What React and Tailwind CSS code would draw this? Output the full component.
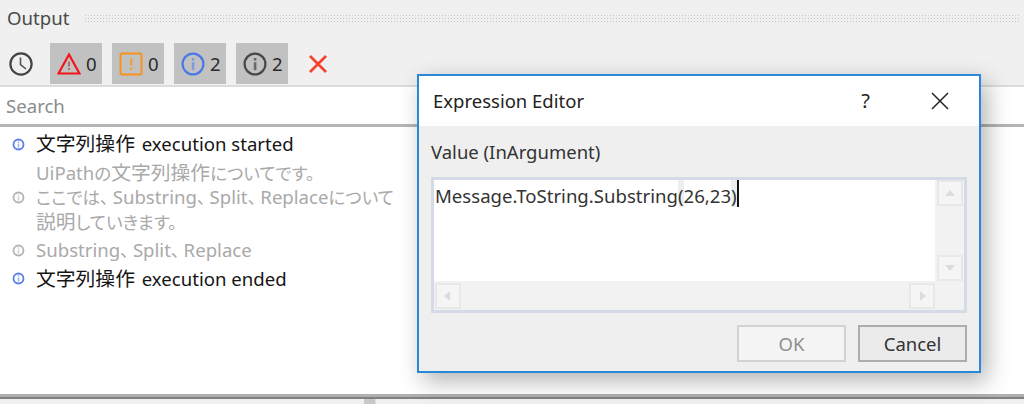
import React from "react";

const FONT = { fontFamily: '"Noto Sans", "Noto Sans CJK JP", sans-serif' };

// small round info marker used in the log rows
const RowIcon = ({ color }) => (
  <svg width="13" height="13" viewBox="0 0 13 13" fill="none" aria-hidden="true">
    <circle cx="6.5" cy="6.5" r="5" stroke={color} strokeWidth="1.8" />
    <rect x="5.7" y="3.4" width="1.6" height="1.4" fill={color} opacity="0.6" />
    <rect x="5.7" y="5.6" width="1.6" height="4" fill={color} opacity="0.6" />
  </svg>
);

const ClockIcon = () => (
  <svg width="26" height="26" viewBox="0 0 26 26" fill="none" aria-hidden="true">
    <circle cx="13" cy="13" r="10.6" stroke="#444" strokeWidth="2.2" />
    <path d="M12.5 6.5V13.5L18 18" stroke="#555" strokeWidth="1.6" />
  </svg>
);

const ErrorIcon = () => (
  <svg width="24" height="24" viewBox="0 0 24 24" fill="none" aria-hidden="true">
    <path d="M12 2.5L22.5 21.5H1.5L12 2.5Z" stroke="#f4141c" strokeWidth="2.2" />
    <rect x="11" y="9.5" width="2" height="5" fill="#b9686a" />
    <rect x="11" y="16" width="2" height="2" fill="#b9686a" />
  </svg>
);

const WarnIcon = () => (
  <svg width="24" height="24" viewBox="0 0 24 24" fill="none" aria-hidden="true">
    <rect x="1.5" y="1.5" width="21" height="21" rx="1.5" stroke="#f7921e" strokeWidth="2" />
    <rect x="11" y="6.5" width="2.4" height="7" fill="#f0a040" />
    <rect x="11" y="15.5" width="2.4" height="2.4" fill="#f0a040" />
  </svg>
);

const InfoIcon = ({ color, fill }) => (
  <svg width="24" height="24" viewBox="0 0 24 24" fill="none" aria-hidden="true">
    <circle cx="12" cy="12" r="10.4" stroke={color} strokeWidth="2.2" />
    <rect x="10.8" y="6" width="2.6" height="2.6" fill={fill} />
    <rect x="10.8" y="10.2" width="2.6" height="8" fill={fill} />
  </svg>
);

const CloseRed = () => (
  <svg width="20" height="20" viewBox="0 0 20 20" fill="none" aria-hidden="true">
    <path d="M2 2L18 18M18 2L2 18" stroke="#f5402c" strokeWidth="2.6" />
  </svg>
);

const FilterButton = ({ icon, count }) => (
  <div className="w-[52px] h-[41px] bg-[#c1c1c1] flex items-center pl-[7px] gap-[5px]">
    {icon}
    <span className="text-[18.6px] text-[#2a2a2a]">{count}</span>
  </div>
);

const ScrollButton = ({ points }) => (
  <div className="w-[26px] h-[26px] bg-[#f5f5f5] border-2 border-[#e8e8e8] flex items-center justify-center">
    <svg width="14" height="14" viewBox="0 0 14 14" aria-hidden="true">
      <polygon points={points} fill="#dcdcdc" />
    </svg>
  </div>
);

// kanji sit a little larger than the latin text
const Kanji = ({ children }) => <span className="text-[19.8px]">{children}</span>;

// kana and punctuation are set tight in the reference
const Kana = ({ children }) => (
  <span className="text-[17.5px] [font-feature-settings:'palt']">{children}</span>
);

const Comma = () => (
  <span className="text-[17.5px] pr-[4px] [font-feature-settings:'palt']">、</span>
);

const LogRow = ({ color, dim, children, className }) => (
  <div className={`flex items-center ${className}`}>
    <div className="w-[36px] flex justify-center">
      <RowIcon color={color} />
    </div>
    <div className={`leading-[24.5px] text-[18.6px] whitespace-nowrap ${dim ? "text-[#a9a9a9]" : "text-[#151515]"}`}>
      {children}
    </div>
  </div>
);

export default function App() {
  return (
    <div className="relative w-[1024px] h-[404px] overflow-hidden bg-[#f0f0f0] flex flex-col" style={FONT}>
      {/* Output panel header */}
      <div className="h-[36px] flex items-center pl-[7px] gap-[15px] shrink-0">
        <span className="text-[18.6px] text-[#4a4a4a]">Output</span>
        <div className="flex-1 h-[8px] mr-[5px] bg-[radial-gradient(#c4c4c4_1px,transparent_1px)] bg-[length:3px_3px]" />
      </div>

      {/* Toolbar */}
      <div className="h-[49px] flex items-start shrink-0 pt-[7px]">
        <div className="w-[50px] h-[41px] flex items-center justify-center pr-[9px]">
          <ClockIcon />
        </div>
        <div className="flex gap-[10px]">
          <FilterButton icon={<ErrorIcon />} count="0" />
          <FilterButton icon={<WarnIcon />} count="0" />
          <FilterButton icon={<InfoIcon color="#4a78e8" fill="#7f9be0" />} count="2" />
          <FilterButton icon={<InfoIcon color="#484848" fill="#6a6a6a" />} count="2" />
        </div>
        <div className="ml-[20px] h-[41px] flex items-center">
          <CloseRed />
        </div>
      </div>

      {/* Search */}
      <div className="h-[42px] shrink-0 bg-white border-t-2 border-b-[3px] border-t-[#dcdcdc] border-b-[#b4b4b4] flex items-center pl-[6px]">
        <span className="text-[18.6px] text-[#8c8c8c]">Search</span>
      </div>

      {/* Log list */}
      <div className="h-[267px] shrink-0 bg-white pt-[5px]">
        <LogRow color="#5b7fe6">
          <Kanji>文字列操作</Kanji>
          <span className="ml-[2px]"> execution started</span>
        </LogRow>
        <LogRow color="#b4b4b4" dim className="mt-[4px]">
          UiPath<Kana>の</Kana><Kanji>文字列操作</Kanji><Kana>についてです。</Kana>
          <br />
          <Kana>ここでは</Kana><Comma />Substring<Comma />Split<Comma />Replace<Kana>について</Kana>
          <br />
          <Kanji>説明</Kanji><Kana>していきます。</Kana>
        </LogRow>
        <LogRow color="#b4b4b4" dim className="mt-[4px]">
          Substring<Comma />Split<Comma />Replace
        </LogRow>
        <LogRow color="#5b7fe6" className="mt-[4px]">
          <Kanji>文字列操作</Kanji>
          <span className="ml-[2px]"> execution ended</span>
        </LogRow>
      </div>

      {/* Bottom splitter */}
      <div className="h-[5px] shrink-0 bg-[#b0b0b0] border-b-2 border-b-[#808080]" />
      <div className="flex-1 flex">
        <div className="ml-[364px] w-[12px] bg-[#c8c8c8] border-r border-r-[#e0e0e0]" />
      </div>

      {/* Expression Editor dialog */}
      <div className="absolute left-[417px] top-[74px] w-[564px] h-[299px] bg-[#efefef] border-2 border-[#2b88d8] flex flex-col shadow-[6px_8px_22px_rgba(0,0,0,0.3)]">
        <div className="h-[50px] shrink-0 bg-white flex items-center pl-[14px] pr-[30px] pb-[1px]">
          <span className="flex-1 text-[18.5px] text-[#222]">Expression Editor</span>
          <span className="text-[20px] text-[#222] mr-[61px]">?</span>
          <svg width="18" height="18" viewBox="0 0 18 18" fill="none" aria-hidden="true">
            <path d="M1 1L17 17M17 1L1 17" stroke="#222" strokeWidth="1.5" />
          </svg>
        </div>

        <div className="flex-1 flex flex-col pl-[12px] pr-[12px]">
          <div className="h-[51px] flex items-center text-[18.5px] text-[#333] shrink-0">Value (InArgument)</div>

          {/* Editor box */}
          <div className="h-[136px] shrink-0 border-[3px] border-[#d5dbe6] flex flex-col">
            <div className="flex-1 flex min-h-0">
              <div className="flex-1 bg-white pl-[1px] flex items-start">
                <div className="flex items-start h-[27px] text-[18.6px] leading-[32px] text-[#333]">
                  <span className="h-[27px]">Message.ToString.Substring</span>
                  <span className="h-[27px] bg-[#eeeeee]">(</span>
                  <span className="h-[27px]">26,23</span>
                  <span className="h-[27px] bg-[#eeeeee]">)</span>
                  <span className="w-[2px] h-[27px] bg-[#111]" />
                </div>
              </div>
              <div className="w-[29px] bg-[#f2f2f2] flex flex-col items-center justify-between">
                <ScrollButton points="7,4 12,10 2,10" />
                <ScrollButton points="2,4 12,4 7,10" />
              </div>
            </div>
            <div className="h-[29px] shrink-0 bg-[#f2f2f2] flex items-center pl-[1px] pr-[29px] justify-between">
              <ScrollButton points="3,7 9,2 9,12" />
              <ScrollButton points="5,2 11,7 5,12" />
            </div>
          </div>

          {/* Dialog buttons */}
          <div className="flex justify-end gap-[12px] mt-[12px]">
            <div className="w-[109px] h-[37px] bg-[#f4f4f4] border-2 border-[#d2d2d2] flex items-center justify-center text-[18.5px] text-[#8e8e8e]">
              OK
            </div>
            <div className="w-[109px] h-[37px] bg-[#ebebeb] border-2 border-[#adadad] flex items-center justify-center text-[18.5px] text-[#333]">
              Cancel
            </div>
          </div>
        </div>
      </div>
    </div>
  );
}
